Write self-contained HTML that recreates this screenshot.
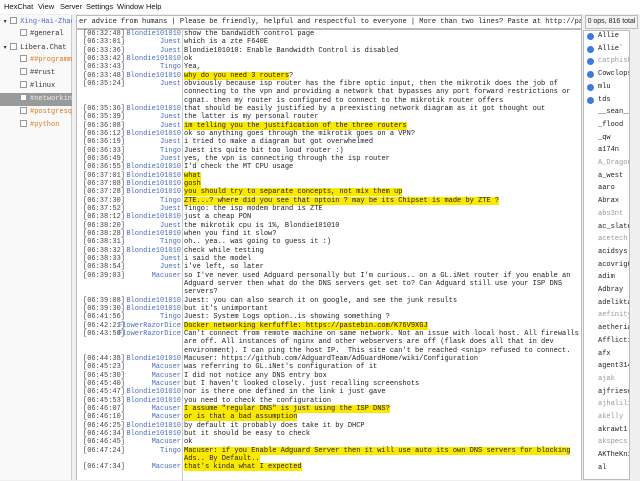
<!DOCTYPE html>
<html><head><meta charset="utf-8"><style>
*{margin:0;padding:0;box-sizing:border-box}
body{width:640px;height:480px;overflow:hidden;background:#f0f0f0;font-family:"Liberation Sans",sans-serif;position:relative}
.menu{position:absolute;left:0;top:0;width:640px;height:14px;background:#fff;font-size:7.5px;color:#111}
.menu span{position:absolute;top:2px}
.tree{position:absolute;left:0;top:15px;width:72px;height:465px;background:#f9f9f9;border-right:1px solid #ccc;font-family:"Liberation Mono",monospace;font-size:7px;color:#333}
.tree div{position:absolute;height:13px;line-height:13px;white-space:nowrap;overflow:hidden;width:72px}
.ic{display:inline-block;width:7px;height:7px;border:1px solid #999;background:#fff;vertical-align:-1px;margin-right:3px}
.topic{position:absolute;left:76px;top:15px;width:506px;height:14px;background:#fff;border:1px solid #bbb;font-family:"Liberation Mono",monospace;font-size:7px;line-height:12px;padding-left:2px;white-space:nowrap;overflow:hidden;color:#222}
.ops{position:absolute;left:585px;top:15px;width:53px;height:14px;border:1px solid #bbb;background:#f4f4f4;font-size:7px;line-height:12px;text-align:center;color:#222}
.chat{position:absolute;left:76px;top:29px;width:506px;height:451px;background:#fff;border:1px solid #bbb;border-bottom:none}
.sep{position:absolute;left:105px;top:0;width:1px;height:451px;background:#ccc}
.ln{position:absolute;left:0;height:8.33px;line-height:8.33px;font-family:"Liberation Mono",monospace;font-size:7px;white-space:pre;color:#222}
.ts{position:absolute;left:6px;color:#444}
.nk{position:absolute;left:4px;width:100px;text-align:right;color:#4a6cc4}
.tx{position:absolute;left:107px}
.hl{background:#fbe800}
.users{position:absolute;left:583px;top:30px;width:47px;height:450px;background:#fff;border:1px solid #bbb;font-family:"Liberation Mono",monospace;font-size:7px;overflow:hidden}
.users div{position:absolute;left:14px;white-space:nowrap;color:#222}
.users .g{color:#999}
.dot{position:absolute;left:-11px;top:1px;width:7px;height:7px;border-radius:50%;background:#3b7ae0}
.sb{position:absolute;left:630px;top:30px;width:10px;height:450px;background:#f0f0f0}
</style></head><body>
<div class="menu"><span style="left:4px">HexChat</span><span style="left:38px">View</span><span style="left:60px">Server</span><span style="left:86px">Settings</span><span style="left:117px">Window</span><span style="left:146px">Help</span></div>
<div class="tree">
<div style="top:0"><span style="font-size:6px">&nbsp;▾ </span><span class="ic"></span><span style="color:#4a6cc4">Xing-Hai-Zhao</span></div>
<div style="top:13px;padding-left:20px"><span class="ic"></span>#general</div>
<div style="top:26px"><span style="font-size:6px">&nbsp;▾ </span><span class="ic"></span>Libera.Chat</div>
<div style="top:39px;padding-left:20px;color:#e07820"><span class="ic"></span>##programming</div>
<div style="top:52px;padding-left:20px"><span class="ic"></span>##rust</div>
<div style="top:65px;padding-left:20px"><span class="ic"></span>#linux</div>
<div style="top:78px;padding-left:20px;background:#9a9a9a;color:#eee"><span class="ic"></span>#networking</div>
<div style="top:91px;padding-left:20px;color:#e07820"><span class="ic"></span>#postgresql</div>
<div style="top:104px;padding-left:20px;color:#e07820"><span class="ic"></span>#python</div>
</div>
<div class="topic">er advice from humans | Please be friendly, helpful and respectful to everyone | More than two lines? Paste at http://pastie.org/</div>
<div class="ops">0 ops, 816 total</div>
<div class="chat"><div class="sep"></div><div id="c"></div></div>
<div class="users" id="u"></div>
<div class="sb"></div>
<script>
var L=[
["06:32:48","Blondie101010","show the bandwidth control page"],
["06:33:01","Juest","which is a zte F640E"],
["06:33:36","Juest","Blondie101010: Enable Bandwidth Control is disabled"],
["06:33:42","Blondie101010","ok"],
["06:33:43","Tingo","Yea,"],
["06:33:48","Blondie101010","<span class=hl>why do you need 3 routers</span>?"],
["06:35:24","Juest","obviously because isp router has the fibre optic input, then the mikrotik does the job of"],
["","","connecting to the vpn and providing a network that bypasses any port forward restrictions or"],
["","","cgnat. then my router is configured to connect to the mikrotik router offers"],
["06:35:36","Blondie101010","that should be easily justified by a preexisting network diagram as it got thought out"],
["06:35:39","Juest","the latter is my personal router"],
["06:36:08","Juest","<span class=hl>im telling you the justification of the three routers</span>"],
["06:36:12","Blondie101010","ok so anything goes through the mikrotik goes on a VPN?"],
["06:36:19","Juest","i tried to make a diagram but got overwhelmed"],
["06:36:33","Tingo","Juest its quite bit too loud router :)"],
["06:36:49","Juest","yes, the vpn is connecting through the isp router"],
["06:36:55","Blondie101010","I'd check the MT CPU usage"],
["06:37:01","Blondie101010","<span class=hl>what</span>"],
["06:37:08","Blondie101010","<span class=hl>gosh</span>"],
["06:37:28","Blondie101010","<span class=hl>you should try to separate concepts, not mix them up</span>"],
["06:37:30","Tingo","<span class=hl>ZTE...? where did you see that optoin ? may be its Chipset is made by ZTE ?</span>"],
["06:37:52","Juest","Tingo: the isp modem brand is ZTE"],
["06:38:12","Blondie101010","just a cheap PON"],
["06:38:20","Juest","the mikrotik cpu is 1%, Blondie101010"],
["06:38:28","Blondie101010","when you find it slow?"],
["06:38:31","Tingo","oh.. yea.. was going to guess it :)"],
["06:38:32","Blondie101010","check while testing"],
["06:38:33","Juest","i said the model"],
["06:38:54","Juest","i've left, so later"],
["06:39:03","Macuser","so I've never used Adguard personally but I'm curious.. on a GL.iNet router if you enable an"],
["","","Adguard server then what do the DNS servers get set to? Can Adguard still use your ISP DNS"],
["","","servers?"],
["06:39:08","Blondie101010","Juest: you can also search it on google, and see the junk results"],
["06:39:30","Blondie101010","but it's unimportant"],
["06:41:56","Tingo","Juest: System Logs option..is showing something ?"],
["06:42:21","FlowerRazorDice","<span class=hl>Docker networking kerfuffle: https://pastebin.com/K76V9XGJ</span>"],
["06:43:50","FlowerRazorDice","Can't connect from remote machine on same network. Not an issue with local host. All firewalls"],
["","","are off. All instances of nginx and other webservers are off (flask does all that in dev"],
["","","environment). I can ping the host IP.  This site can't be reached &lt;snip&gt; refused to connect."],
["06:44:38","Blondie101010","Macuser: https://github.com/AdguardTeam/AdGuardHome/wiki/Configuration"],
["06:45:23","Macuser","was referring to GL.iNet's configuration of it"],
["06:45:30","Macuser","I did not notice any DNS entry box"],
["06:45:40","Macuser","but I haven't looked closely. just recalling screenshots"],
["06:45:47","Blondie101010","nor is there one defined in the link i just gave"],
["06:45:53","Blondie101010","you need to check the configuration"],
["06:46:07","Macuser","<span class=hl>I assume \"regular DNS\" is just using the ISP DNS?</span>"],
["06:46:10","Macuser","<span class=hl>or is that a bad assumption</span>"],
["06:46:25","Blondie101010","by default it probably does take it by DHCP"],
["06:46:34","Blondie101010","but it should be easy to check"],
["06:46:45","Macuser","ok"],
["06:47:24","Tingo","<span class=hl>Macuser: if you Enable Adguard Server then it will use auto its own DNS servers for blocking</span>"],
["","","<span class=hl>Ads.. By Default..</span>"],
["06:47:34","Macuser","<span class=hl>that's kinda what I expected</span>"]];
var h="";L.forEach(function(r,i){h+='<div class="ln" style="top:'+(i*8.33).toFixed(2)+'px;width:504px"><span class="ts">'+(r[0]?'['+r[0]+']':'')+'</span><span class="nk">'+r[1]+'</span><span class="tx">'+r[2]+'</span></div>'});
document.getElementById('c').innerHTML=h;
var U=[["Allie",1],["Allie`",1],["catphish",2],["Cowclops",1],["mlu",1],["tds",1],["__sean__"],["_flood"],["_qw"],["a174n"],["A_Dragon",0,1],["a_west"],["aaro"],["Abrax"],["abs3nt",0,1],["ac_slate"],["acetech",0,1],["acidsys"],["acovrig6"],["adim"],["Adbray"],["adelikta"],["aefinity",0,1],["aetheria"],["Afflicti"],["afx"],["agent314"],["ajak",0,1],["ajfriese"],["ajhalili",0,1],["akelly",0,1],["akrawt1"],["akspecs",0,1],["AKTheKni"],["al"]];
var s="";U.forEach(function(u,i){var g=(u[1]==2||u[2]);s+='<div class="'+(g?'g':'')+'" style="top:'+(1+i*12.7).toFixed(1)+'px">'+(u[1]?'<span class="dot"></span>':'')+u[0]+'</div>'});
document.getElementById('u').innerHTML=s;
</script>
</body></html>
